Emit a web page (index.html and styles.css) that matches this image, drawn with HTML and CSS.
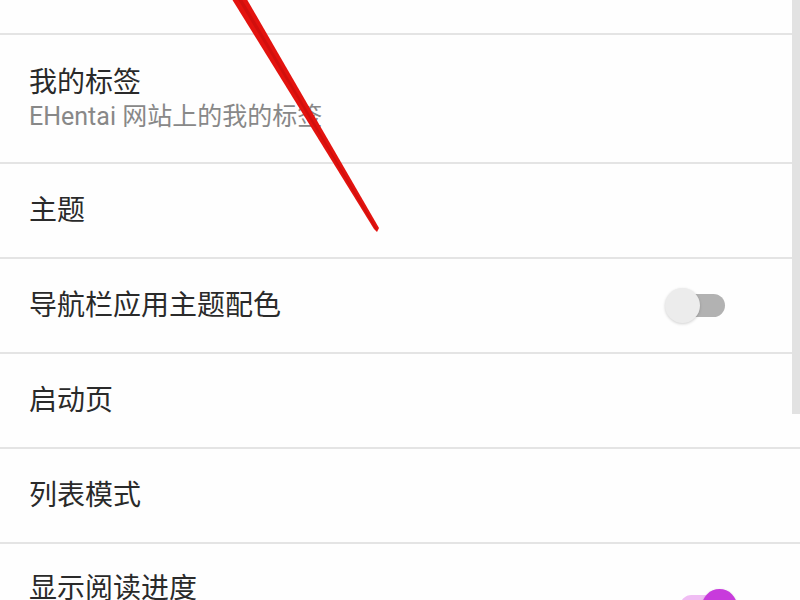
FILE: index.html
```html
<!DOCTYPE html>
<html lang="zh-CN">
<head>
<meta charset="utf-8">
<title>设置</title>
<link rel="stylesheet" href="styles.css">
</head>
<body>
<div class="screen">
  <ul class="list">
    <li class="row row-clipped"></li>
    <li class="row row-two">
      <div class="texts">
        <div class="title">我的标签</div>
        <div class="subtitle">EHentai 网站上的我的标签</div>
      </div>
    </li>
    <li class="row">
      <div class="texts"><div class="title">主题</div></div>
    </li>
    <li class="row">
      <div class="texts"><div class="title">导航栏应用主题配色</div></div>
      <div class="switch">
        <span class="track"></span>
        <span class="thumb"></span>
      </div>
    </li>
    <li class="row">
      <div class="texts"><div class="title">启动页</div></div>
    </li>
    <li class="row">
      <div class="texts"><div class="title">列表模式</div></div>
    </li>
    <li class="row row-two row-last">
      <div class="texts"><div class="title">显示阅读进度</div></div>
      <div class="switch switch-on">
        <span class="track"></span>
        <span class="thumb"></span>
      </div>
    </li>
  </ul>
  <div class="scrollbar"></div>
  <svg class="arrow" width="800" height="600" viewBox="0 0 800 600" aria-hidden="true">
    <polygon points="230,-4 245,-4 379,228 377,232 374,229" fill="#e3130f"/>
    <polygon points="236,-4 240,-4 377,229 376,230" fill="#c40d0b" opacity="0.6"/>
  </svg>
</div>
</body>
</html>
```

FILE: styles.css
```css
* { box-sizing: border-box; }

html, body {
  margin: 0;
  padding: 0;
  background: #ffffff;
}

body {
  font-family: "Roboto", "Noto Sans CJK SC", sans-serif;
  color: #2b2b2b;
}

.screen {
  position: relative;
  width: 800px;
  height: 600px;
  overflow: hidden;
  background: #fefefe;
}

.list {
  list-style: none;
  margin: 0;
  padding: 0;
}

.row {
  display: flex;
  align-items: center;
  height: 95px;
  padding: 0 63px 0 29px;
  border-bottom: 2px solid #e4e4e4;
}

.row-clipped {
  height: 35px;
}

.row-two {
  height: 129px;
}

.row-last {
  align-items: flex-start;
  padding-top: 27px;
}

.row-last .switch {
  margin-top: 18px;
}

.texts {
  flex: 1;
  display: flex;
  flex-direction: column;
}

.title {
  font-size: 28px;
  line-height: 36px;
  color: #2a2a2a;
}

.subtitle {
  font-size: 25px;
  line-height: 30px;
  color: #888888;
  margin-top: 1px;
}

.switch {
  position: relative;
  width: 72px;
  height: 35px;
  flex: none;
}

.switch .track {
  position: absolute;
  left: 15px;
  top: 6px;
  width: 45px;
  height: 23px;
  border-radius: 12px;
  background: #b2b2b2;
}

.switch .thumb {
  position: absolute;
  left: 0;
  top: 0;
  width: 35px;
  height: 35px;
  border-radius: 50%;
  background: #ececec;
  box-shadow: 0 1px 3px rgba(0, 0, 0, 0.18);
}

.switch-on .track {
  background: #f0bdf3;
}

.switch-on .thumb {
  left: 37px;
  background: #c83bdc;
}

.scrollbar {
  position: absolute;
  right: 0;
  top: 0;
  width: 8px;
  height: 414px;
  background: #e2e2e2;
}

.arrow {
  position: absolute;
  left: 0;
  top: 0;
  pointer-events: none;
}
```
